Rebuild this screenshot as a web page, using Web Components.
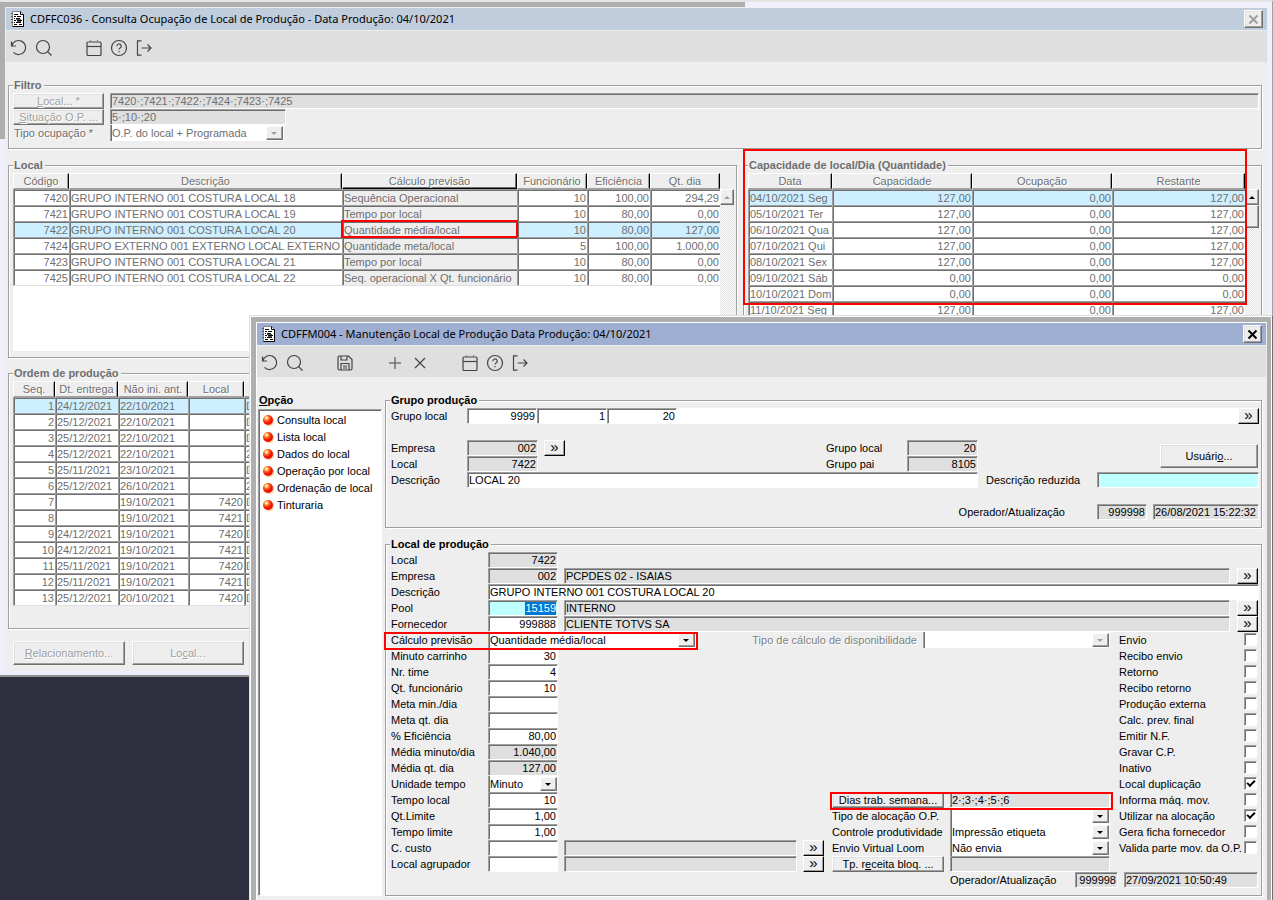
<!DOCTYPE html>
<html lang="pt-BR">
<head>
<meta charset="utf-8">
<title>Manutenção Local de Produção</title>
<style>
  html, body { margin: 0; height: 100%; }
  body { background: #2e3040; color: #000; font: 11px/16px "Liberation Sans", Arial, sans-serif; overflow: hidden; }
</style>
</head>
<body>
<app-desktop></app-desktop>
<script>
/* Look shared by every control: sunken fields, raised buttons. */
const CONTROLS = `
  *, *::before, *::after { box-sizing: border-box; }
  input, button, select { font: inherit; color: inherit; margin: 0; border-radius: 0; min-width: 0; }
  label { white-space: nowrap; height: 16px; line-height: 16px; }
  .in { height: 16px; width: 100%; padding: 0 1px; background: #fff; outline: 0; line-height: 14px;
    border: 1px solid; border-color: #9f9f9f #fff #fff #9f9f9f; box-shadow: inset 1px 1px 0 #6f6f6f; }
  .num { text-align: right; }
  .ro { background: #dfdfdf; }
  .cyan { background: #bfffff; }
  .btn { background: #eee; padding: 0; white-space: nowrap; line-height: 12px; border: 1px solid;
    border-color: #fff #6f6f6f #6f6f6f #fff; box-shadow: inset -1px -1px 0 #9f9f9f, inset 1px 1px 0 #e0e0e0; }
  .more { width: 21px; height: 16px; background: #eee; padding: 0 0 2px; font-size: 15px; line-height: 12px; border: 1px solid;
    border-color: #fff #000 #000 #fff; box-shadow: inset -1px -1px 0 #9f9f9f; }
  .combo { position: relative; display: block; height: 16px; background: #fff; border-left: 1px solid #9f9f9f;
    box-shadow: inset 1px 0 0 #6f6f6f; }
  .combo select { appearance: none; display: block; width: 100%; height: 16px; padding: 0 18px 0 1px; border: 0; background: none; line-height: 16px; opacity: 1; }
  .combo::before { content: ""; position: absolute; right: 1px; top: 1px; width: 17px; height: 14px; background: #eee; border: 1px solid;
    border-color: #fff #6f6f6f #6f6f6f #fff; box-shadow: inset -1px -1px 0 #9f9f9f; pointer-events: none; }
  .combo::after { content: ""; position: absolute; right: 7px; top: 7px; border: 3px solid transparent; border-top-color: #000; border-bottom: 0; }
  .combo.off::after { border-top-color: #9f9f9f; }
  .mark { border: 2px solid #f00; pointer-events: none; z-index: 2; }
`;

const GLYPHS = {
  undo: '<path d="M1.5 2.5v4.5h4.5M1.8 7A7 7 0 1 1 3.5 13.3"/>',
  search: '<circle cx="8" cy="8" r="6.5"/><path d="M12.8 12.8l3.7 3.7"/>',
  save: '<path d="M2 3.500a1.500 1.500 0 0 1 1.500-1.500h9L16 5.500v9a1.500 1.500 0 0 1-1.500 1.500h-11A1.500 1.500 0 0 1 2 14.500zM5 16V9.500h8V16M5 2v4h6V2.500M7 12h4M7 14h4"/>',
  plus: '<path stroke="#777" stroke-width="1.6" d="M9 3v12M3 9h12"/>',
  cross: '<path d="M4 4l10 10M14 4L4 14"/>',
  calendar: '<rect x="2" y="3" width="14" height="13.500" rx="1"/><path d="M2 7.500h14"/><path stroke="#888" d="M5.500 1v3M12.500 1v3"/>',
  help: '<circle cx="9" cy="9" r="7.500"/><path d="M6.800 7.200a2.200 2.200 0 1 1 3.300 1.900c-.8.5-1.100.8-1.100 1.500M9 12v1.200"/>',
  exit: '<path d="M6.500 1.800H2.500v14.400h4M6.500 9h9.500M12.500 5.500L16 9l-3.500 3.500"/>'
};
const NAMES = { undo: "Desfazer", search: "Pesquisar", save: "Salvar", plus: "Incluir", cross: "Excluir", calendar: "Calendário", help: "Ajuda", exit: "Sair" };

function define(name, render) {
  customElements.define(name, class extends HTMLElement {
    connectedCallback() {
      if (this.shadowRoot) return;
      const template = document.createElement("template");
      template.innerHTML = render(this);
      this.attachShadow({ mode: "open" }).append(template.content.cloneNode(true));
    }
  });
}

const at = (row, col) => `style="grid-row:${row};grid-column:${col}"`;
const select = (id, text, off) => `<span class="combo${off ? " off" : ""}"><select id="${id}"${off ? " disabled" : ""}><option>${text}</option></select></span>`;

define("tool-button", el => `
  <style>
    :host { display: block; width: 25px; }
    button { display: grid; place-items: center; width: 25px; height: 32px; padding: 0; border: 0; background: none; }
    svg { width: 18px; height: 18px; fill: none; stroke: #444; stroke-width: 1.2; }
  </style>
  <button type="button" aria-label="${NAMES[el.getAttribute("name")]}"><svg viewBox="0 0 18 18">${GLYPHS[el.getAttribute("name")]}</svg></button>`);

define("tool-bar", el => `
  <style>
    :host { display: flex; box-sizing: border-box; height: 31px; padding-top: 1px; background: #dfdfdf; }
    i { width: 25px; }
  </style>
  ${el.getAttribute("items").split(" ").map(n => n === "-" ? "<i></i>" : `<tool-button name="${n}"></tool-button>`).join("")}`);

define("app-window", el => `
  <style>
    ${CONTROLS}
    :host { display: block; background: #eee; --bar: #bfcddd; --x: #9f9f9f; }
    :host([active]) { --bar: #9fafd1; --x: #000; }
    header { display: flex; align-items: center; height: 23px; padding: 0 4px 0 5px; gap: 5px; background: var(--bar);
      border-bottom: 1px solid #eee; font: 11px/22px "Noto Sans", "Open Sans", sans-serif; color: #000; }
    h1 { flex: 1; margin: 0; font: inherit; white-space: nowrap; }
    .doc { width: 14px; height: 16px; }
    button { display: grid; place-items: center; width: 19px; height: 18px; }
    button svg { width: 11px; height: 11px; stroke: var(--x); stroke-width: 2; }
  </style>
  <header>
    <svg class="doc" viewBox="0 0 14 16"><path d="M1.500.5h8l3 3v12h-11z" fill="#fff" stroke="#888"/><path d="M12.500 3.500v12h-11" fill="none" stroke="#000"/><path d="M9.500.5v3h3" fill="none" stroke="#000"/><path d="M3 3.500h4M3 5.500h2M6 5.500h4M3 7.500h1M5 7.500h4M3 9.500h2M6 9.500h5M3 11.500h1M5 11.500h5M3 13.500h3M8 13.500h3" stroke="#000"/><path d="M5 8.500h5M6 10.500h4" stroke="#555"/><path d="M0 2.500h2M0 5.500h2M0 8.500h2M0 11.500h2" stroke="#555"/></svg>
    <h1>${el.getAttribute("caption")}</h1>
    <button class="btn" type="button" aria-label="Fechar"><svg viewBox="0 0 11 11"><path d="M1.500 1.500l8 8M9.500 1.500l-8 8"/></svg></button>
  </header>
  <slot></slot>`);

define("group-box", el => `
  <style>
    :host { display: block; min-width: 0; }
    fieldset { margin: 0; min-width: 0; box-sizing: border-box; height: 100%; padding: 1px 2px var(--foot, 6px) 4px;
      border: 1px solid #9f9f9f; box-shadow: 1px 1px 0 #fff, inset 1px 1px 0 #fff; }
    legend { margin: 0; padding: 0 2px 0 1px; height: 14px; font-weight: bold; line-height: 14px; white-space: nowrap; background: #eee; }
  </style>
  <fieldset><legend>${el.getAttribute("caption")}</legend><slot></slot></fieldset>`);

const GRIDS = {
  local: {
    cols: [["Código", 56, "n"], ["Descrição", 0], ["Cálculo previsão", 175, "g"], ["Funcionário", 70, "n"], ["Eficiência", 63, "n"], ["Qt. dia", 70, "n"]],
    picked: 2, boxed: [2, 2], up: "#9f9f9f",
    rows: ["7420|GRUPO INTERNO 001 COSTURA LOCAL 18|Sequência Operacional|10|100,00|294,29",
      "7421|GRUPO INTERNO 001 COSTURA LOCAL 19|Tempo por local|10|80,00|0,00",
      "7422|GRUPO INTERNO 001 COSTURA LOCAL 20|Quantidade média/local|10|80,00|127,00",
      "7424|GRUPO EXTERNO 001 EXTERNO LOCAL EXTERNO|Quantidade meta/local|5|100,00|1.000,00",
      "7423|GRUPO INTERNO 001 COSTURA LOCAL 21|Tempo por local|10|80,00|0,00",
      "7425|GRUPO INTERNO 001 COSTURA LOCAL 22|Seq. operacional X Qt. funcionário|10|80,00|0,00"]
  },
  capacity: {
    cols: [["Data", 84], ["Capacidade", 140, "n"], ["Ocupação", 140, "n"], ["Restante", 0, "n"]],
    picked: 0, up: "#000", thumb: true,
    rows: ["04/10/2021 Seg|127,00|0,00|127,00", "05/10/2021 Ter|127,00|0,00|127,00", "06/10/2021 Qua|127,00|0,00|127,00",
      "07/10/2021 Qui|127,00|0,00|127,00", "08/10/2021 Sex|127,00|0,00|127,00", "09/10/2021 Sáb|0,00|0,00|0,00",
      "10/10/2021 Dom|0,00|0,00|0,00", "11/10/2021 Seg|127,00|0,00|127,00"]
  },
  orders: {
    cols: [["Seq.", 42, "n"], ["Dt. entrega", 63], ["Não ini. ant.", 70], ["Local", 56, "n"], ["", 0]],
    picked: 0,
    rows: ["1|24/12/2021|22/10/2021||D", "2|25/12/2021|22/10/2021||D", "3|25/12/2021|22/10/2021||D", "4|25/12/2021|22/10/2021||2",
      "5|25/11/2021|23/10/2021||D", "6|25/12/2021|26/10/2021||2", "7||19/10/2021|7420|D", "8||19/10/2021|7421|D",
      "9|24/12/2021|19/10/2021|7420|D", "10|24/12/2021|19/10/2021|7421|D", "11|25/11/2021|19/10/2021|7420|D",
      "12|25/11/2021|19/10/2021|7421|D", "13|25/12/2021|20/10/2021|7420|D"]
  }
};

define("data-grid", el => {
  const g = GRIDS[el.getAttribute("source")];
  const cell = (t, r, c) => `<td class="${g.cols[c][2] || ""}${g.boxed && g.boxed[0] === r && g.boxed[1] === c ? " boxed" : ""}">${t}</td>`;
  return `
  <style>
    *, *::before { box-sizing: border-box; }
    :host { display: flex; align-items: stretch; color: #6f6f6f; }
    .sheet { flex: 1; min-width: 0; }
    :host([source=local]) .sheet { background: linear-gradient(#eee 16px, #fff 16px); }
    table { width: 100%; table-layout: fixed; border-collapse: separate; border-spacing: 0; }
    th, td { height: 16px; overflow: hidden; white-space: nowrap; text-align: left; line-height: 14px; font-weight: normal; }
    td { padding: 1px 1px 0; }
    th { padding: 1px 0 0; line-height: 13px; text-align: center; background: #eee; border: 1px solid; border-color: #fff #000 #9f9f9f #fff; text-shadow: 1px 1px 0 #fff; box-shadow: inset -1px 0 0 #9f9f9f; }
    th.g { border-bottom-color: #000; box-shadow: inset -1px -1px 0 #6f6f6f; }
    td { background: #fff; border-top: 1px solid #9f9f9f; border-left: 1px solid #9f9f9f; box-shadow: inset 1px 1px 0 #6f6f6f; }
    tr:last-child td { height: 17px; border-bottom: 1px solid #dfdfdf; }
    .picked td { background: #ceefff; }
    .n { text-align: right; }
    th.n { text-align: center; }
    td.g, .picked td.g { background: #eee; }
    td.boxed { outline: 2px solid #f00; outline-offset: -1px; }
    .rail { width: 14px; margin-top: 16px; background: repeating-conic-gradient(#dfdfdf 0 25%, #fff 0 50%) 0 0 / 2px 2px; }
    .rail i { display: grid; place-items: center; height: 16px; background: #eee; border: 1px solid; border-color: #fff #6f6f6f #6f6f6f #fff; box-shadow: inset -1px -1px 0 #9f9f9f; }
    .rail i + i { height: 23px; }
    .rail i:first-child::before { content: ""; border: 3px solid transparent; border-bottom-color: ${g.up}; border-top: 0; }
  </style>
  <div class="sheet"><table>
    <colgroup>${g.cols.map(c => `<col${c[1] ? ` style="width:${c[1]}px"` : ""}>`).join("")}</colgroup>
    <thead><tr>${g.cols.map(c => `<th class="${c[2] || ""}">${c[0]}</th>`).join("")}</tr></thead>
    <tbody>${g.rows.map((r, i) => `<tr class="${i === g.picked ? "picked" : ""}">${r.split("|").map((t, c) => cell(t, i, c)).join("")}</tr>`).join("")}</tbody>
  </table></div>
  ${g.up ? `<div class="rail"><i></i>${g.thumb ? "<i></i>" : ""}</div>` : ""}`;
});

define("filter-form", () => `
  <style>
    ${CONTROLS}
    :host { display: grid; grid-template-columns: 91px minmax(0, 1fr); grid-auto-rows: 16px; column-gap: 6px; color: #6f6f6f; }
    .btn { height: 16px; color: #9f9f9f; text-shadow: 1px 1px 0 #fff; }
    label { padding-left: 1px; text-shadow: 1px 1px 0 #fff; }
    .short { width: 176px; }
    .combo { width: 174px; }
  </style>
  <button class="btn" type="button" disabled><u>L</u>ocal... *</button>
  <input class="in ro" aria-label="Local" readonly value="7420·;7421·;7422·;7424·;7423·;7425">
  <button class="btn" type="button" disabled><u>S</u>ituação O.P. ...</button>
  <input class="in ro short" aria-label="Situação O.P." readonly value="5·;10·;20">
  <label for="kind">Tipo ocupação *</label>
  ${select("kind", "O.P. do local + Programada", true)}`);

define("occupation-view", () => `
  <style>
    ${CONTROLS}
    :host { display: block; padding: 16px 5px 6px 2px; }
    group-box { color: #6f6f6f; }
    .filter { --foot: 7px; }
    .panes { display: grid; grid-template-columns: minmax(0, 729fr) minmax(0, 519fr); gap: 6px; padding-top: 9px; }
    .left { display: grid; gap: 8px; align-content: start; }
    .left data-grid[source=local] { min-height: 178px; }
    .orders { --foot: 22px; }
    .capacity { position: relative; }
    .capacity .mark { position: absolute; left: 0; right: 15px; top: -9px; height: 156px; }
    .actions { display: flex; gap: 7px; padding: 4px 0 0 5px; }
    .actions .btn { width: 112px; height: 24px; color: #9f9f9f; text-shadow: 1px 1px 0 #fff; }
  </style>
  <group-box class="filter" caption="Filtro"><filter-form></filter-form></group-box>
  <div class="panes">
    <div class="left">
      <group-box caption="Local"><data-grid source="local"></data-grid></group-box>
      <group-box class="orders" caption="Ordem de produção"><data-grid source="orders"></data-grid></group-box>
      <div class="actions">
        <button class="btn" type="button" disabled><u>R</u>elacionamento...</button>
        <button class="btn" type="button" disabled>Lo<u>c</u>al...</button>
      </div>
    </div>
    <group-box class="capacity" caption="Capacidade de local/Dia (Quantidade)"><data-grid source="capacity"></data-grid><span class="mark"></span></group-box>
  </div>`);

define("option-list", () => `
  <style>
    :host { display: flex; flex-direction: column; }
    h2 { margin: 0; padding: 0 1px; font-size: 11px; line-height: 14px; }
    ul { flex: 1; margin: 2px 0 0; padding: 1px 0 0 4px; list-style: none; background: #fff;
      border: 1px solid; border-color: #9f9f9f #fff #fff #9f9f9f; box-shadow: inset 1px 1px 0 #6f6f6f; }
    a { display: flex; align-items: center; gap: 4px; height: 17px; color: #000; text-decoration: none; white-space: nowrap; }
    a::before { content: ""; width: 10px; height: 10px; border-radius: 50%; background: radial-gradient(circle at 35% 30%, #fff3b0 0 8%, #ff7a2c 25%, #f31800 50%, #d80000);
      box-shadow: 1px 1px 1px #f5c080; }
  </style>
  <h2><u>O</u>pção</h2>
  <ul>${["Consulta local", "Lista local", "Dados do local", "Operação por local", "Ordenação de local", "Tinturaria"].map(t => `<li><a href="#">${t}</a></li>`).join("")}</ul>`);

define("production-group", () => `
  <style>
    ${CONTROLS}
    :host { display: grid; grid-template-columns: 76px 77px minmax(0, 1fr) 81px 71px 8px 111px 56px 106px; grid-auto-rows: 16px; }
    .run { display: flex; background: #fff; }
    .run .in { width: 70px; }
    .run .more { margin-left: auto; }
    .w71 { width: 71px; }
    .w50 { width: 50px; }
    .who { justify-self: end; padding-right: 32px; }
    .user { width: 98px; height: 24px; place-self: center end; margin-right: 1px; }
  </style>
  <label for="g1" ${at(1, 1)}>Grupo local</label>
  <div class="run" ${at(1, "2/-1")}><input class="in num" id="g1" value="9999"><input class="in num" aria-label="Nível" value="1"><input class="in num" aria-label="Grupo" value="20"><button class="more" type="button">»</button></div>
  <label for="g2" ${at(3, 1)}>Empresa</label><input class="in num ro w71" id="g2" readonly value="002" ${at(3, 2)}>
  <button class="more" type="button" ${at(3, 3)}>»</button>
  <label for="g3" ${at(4, 1)}>Local</label><input class="in num ro w71" id="g3" readonly value="7422" ${at(4, 2)}>
  <label for="g4" ${at(5, 1)}>Descrição</label><input class="in" id="g4" value="LOCAL 20" ${at(5, "2/6")}>
  <label for="g5" ${at(3, 4)}>Grupo local</label><input class="in num ro" id="g5" readonly value="20" ${at(3, 5)}>
  <label for="g6" ${at(4, 4)}>Grupo pai</label><input class="in num ro" id="g6" readonly value="8105" ${at(4, 5)}>
  <button class="btn user" type="button" ${at("3/5", "8/10")}>Usuári<u>o</u>...</button>
  <label for="g7" ${at(5, 7)}>Descrição reduzida</label><input class="in cyan" id="g7" ${at(5, "8/10")}>
  <label class="who" for="g8" ${at(7, "6/8")}>Operador/Atualização</label><input class="in num ro w50" id="g8" readonly value="999998" ${at(7, 8)}>
  <input class="in ro" aria-label="Atualização" readonly value="26/08/2021 15:22:32" ${at(7, 9)}>`);

/* label, value, style of the short field in the left column; the row is the index */
const LEFT = [["Local", "7422", "ro"], ["Empresa", "002", "ro"], null, ["Pool", "15159", "chosen"], ["Fornecedor", "999888", ""], null,
  ["Minuto carrinho", "30", ""], ["Nr. time", "4", ""], ["Qt. funcionário", "10", ""], ["Meta min./dia", "", ""], ["Meta qt. dia", "", ""],
  ["% Eficiência", "80,00", ""], ["Média minuto/dia", "1.040,00", "ro"], ["Média qt. dia", "127,00", "ro"], null,
  ["Tempo local", "10", ""], ["Qt.Limite", "1,00", ""], ["Tempo limite", "1,00", ""], ["C. custo", "", ""], ["Local agrupador", "", ""]];
const CHECKS = ["Envio", "Recibo envio", "Retorno", "Recibo retorno", "Produção externa", "Calc. prev. final", "Emitir N.F.", "Gravar C.P.",
  "Inativo", "Local duplicação", "Informa máq. mov.", "Utilizar na alocação", "Gera ficha fornecedor", "Valida parte mov. da O.P."];
const CHECKED = ["Local duplicação", "Utilizar na alocação"];

define("production-place", () => `
  <style>
    ${CONTROLS}
    :host { display: grid; grid-template-columns: 97px 70px 6px minmax(0, 1fr) 29px 118px 169px 118px 22px; grid-auto-rows: 16px; }
    .chosen { color: #fff; background: linear-gradient(to left, #bfffff 1px, #0078d7 1px 32px, #bfffff 32px); }
    .wide { width: auto; margin-right: 7px; }
    .near { width: auto; margin-right: 6px; }
    .calc { width: 208px; }
    .avail { display: flex; justify-content: flex-end; gap: 6px; margin-right: 9px; color: #808080; text-shadow: 1px 1px 0 #fff; }
    .avail .combo { width: 187px; }
    .side { margin-right: 9px; width: auto; }
    .btn { width: 112px; height: 16px; }
    .stamp { display: flex; gap: 6px; }
    .stamp label { width: 119px; }
    .stamp .in { flex: 1; width: auto; margin-right: 1px; }
    .stamp .code { flex: none; width: 43px; margin: 0; padding: 0 1px; }
    .tick { appearance: none; justify-self: start; width: 13px; height: 13px; margin: 1px 0 0 7px; background: #fff; border: 1px solid; border-color: #9f9f9f #fff #fff #9f9f9f; box-shadow: inset 1px 1px 0 #6f6f6f; }
    .tick:checked::before { content: ""; display: block; width: 8px; height: 5px; margin: 2px 0 0 2px; border: solid #000; border-width: 0 0 2px 2px; transform: rotate(-45deg); }
    .m1 { width: 314px; height: 18px; margin-left: -7px; }
    .m2 { height: 18px; margin: 0 6px 0 -2px; }
  </style>
  ${LEFT.map((f, i) => f ? `<label for="p${i}" ${at(i + 1, 1)}>${f[0]}</label><input class="in num ${f[2]}" id="p${i}" value="${f[1]}" ${at(i + 1, 2)}>` : "").join("")}
  <input class="in ro wide" aria-label="Nome da empresa" readonly value="PCPDES 02 - ISAIAS" ${at(2, "4/9")}><button class="more" type="button" ${at(2, 9)}>»</button>
  <label for="desc" ${at(3, 1)}>Descrição</label><input class="in" id="desc" value="GRUPO INTERNO 001 COSTURA LOCAL 20" ${at(3, "2/-1")}>
  <input class="in ro wide" aria-label="Nome do pool" readonly value="INTERNO" ${at(4, "4/9")}><button class="more" type="button" ${at(4, 9)}>»</button>
  <input class="in ro wide" aria-label="Nome do fornecedor" readonly value="CLIENTE TOTVS SA" ${at(5, "4/9")}><button class="more" type="button" ${at(5, 9)}>»</button>
  <label for="calc" ${at(6, 1)}>Cálculo previsão</label><div class="calc" ${at(6, "2/5")}>${select("calc", "Quantidade média/local")}</div>
  <span class="mark m1" ${at(6, "1/6")}></span>
  <div class="avail" ${at(6, "4/8")}><label for="avail">Tipo de cálculo de disponibilidade</label>${select("avail", "", true)}</div>
  <label for="unit" ${at(15, 1)}>Unidade tempo</label><div ${at(15, 2)}>${select("unit", "Minuto")}</div>
  <button class="btn" type="button" ${at(16, 6)}>Dias trab. semana...</button><input class="in ro side" aria-label="Dias trabalhados" readonly value="2·;3·;4·;5·;6" ${at(16, 7)}>
  <span class="mark m2" ${at(16, "6/8")}></span>
  <label for="alloc" ${at(17, 6)}>Tipo de alocação O.P.</label><div class="side" ${at(17, 7)}>${select("alloc", "")}</div>
  <label for="ctrl" ${at(18, 6)}>Controle produtividade</label><div class="side" ${at(18, 7)}>${select("ctrl", "Impressão etiqueta")}</div>
  <label for="loom" ${at(19, 6)}>Envio Virtual Loom</label><div class="side" ${at(19, 7)}>${select("loom", "Não envia")}</div>
  <button class="btn" type="button" ${at(20, 6)}>Tp. r<u>e</u>ceita bloq. ...</button><input class="in ro side" aria-label="Receita bloqueada" readonly ${at(20, 7)}>
  ${[19, 20].map(r => `<input class="in ro near" aria-label="Nome" readonly ${at(r, 4)}><button class="more" type="button" ${at(r, 5)}>»</button>`).join("")}
  <div class="stamp" ${at(21, "7/-1")}><label for="who">Operador/Atualização</label><input class="in ro num code" id="who" readonly value="999998"><input class="in ro" aria-label="Atualização" readonly value="27/09/2021 10:50:49"></div>
  ${CHECKS.map((t, i) => `<label for="c${i}" ${at(i + 6, 8)}>${t}</label><input class="tick" type="checkbox" id="c${i}"${CHECKED.includes(t) ? " checked" : ""} ${at(i + 6, 9)}>`).join("")}`);

define("maintenance-view", () => `
  <style>
    :host { display: grid; grid-template-columns: 124px minmax(0, 1fr); gap: 3px; padding: 16px 4px 12px 1px; }
    .forms { display: grid; gap: 9px; align-content: start; --foot: 7px; }
    production-group, production-place { padding-left: 1px; }
  </style>
  <option-list></option-list>
  <div class="forms">
    <group-box caption="Grupo produção"><production-group></production-group></group-box>
    <group-box caption="Local de produção"><production-place></production-place></group-box>
  </div>`);

define("app-desktop", () => `
  <style>
    :host { display: block; position: relative; min-height: 100vh; overflow: hidden; }
    .area { padding: 5px 4px 4px 5px; border-top: 2px solid #e4e4e4; border-right: 1px solid #9f9f9f; border-bottom: 2px solid #8f8f8f;
      background: linear-gradient(#aeaeae, #aeaeae) 0 0 / 745px 5px no-repeat, linear-gradient(#aeaeae, #aeaeae) 0 0 / 5px 137px no-repeat, #efeffd; }
    .back { border: 1px solid #eee; border-bottom: 0; }
    .front { position: absolute; z-index: 5; left: 249px; right: 0; top: 315px; border: 1px solid; border-color: #dfdfdf #6f6f6f #6f6f6f #dfdfdf; }
    .frame { border: 6px solid #afafaf; border-right-width: 5px; box-shadow: inset 1px 1px 0 #fff; padding: 1px 1px 0 1px; background: #eee; outline: 1px solid #fff; outline-offset: -1px; }
  </style>
  <div class="area">
    <app-window class="back" caption="CDFFC036 - Consulta Ocupação de Local de Produção - Data Produção: 04/10/2021">
      <tool-bar items="undo search - calendar help exit"></tool-bar>
      <occupation-view></occupation-view>
    </app-window>
  </div>
  <div class="front"><div class="frame">
    <app-window active caption="CDFFM004 - Manutenção Local de Produção Data Produção: 04/10/2021">
      <tool-bar items="undo search - save - plus cross - calendar help exit"></tool-bar>
      <maintenance-view></maintenance-view>
    </app-window>
  </div></div>`);
</script>
</body>
</html>
